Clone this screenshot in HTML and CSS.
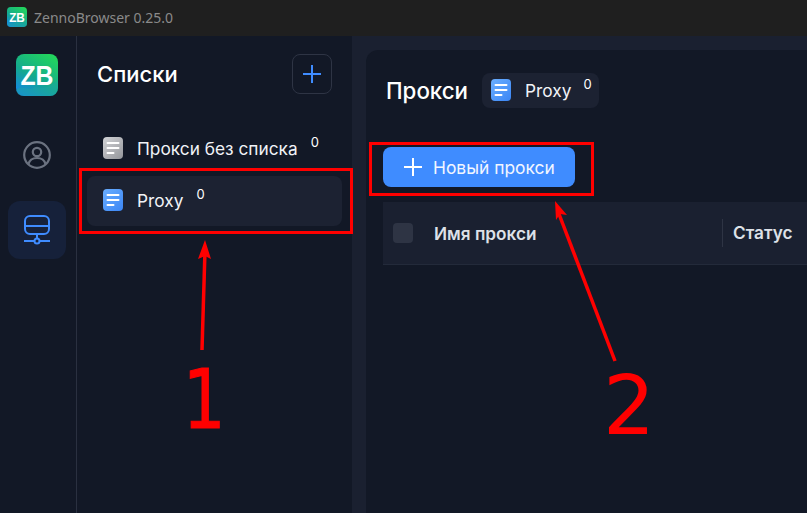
FILE: index.html
```html
<!DOCTYPE html>
<html lang="ru">
<head>
    <meta charset="UTF-8">
    <title>ZennoBrowser 0.25.0</title>
    <link rel="stylesheet" href="styles.css">
</head>
<body>
    <svg width="0" height="0" class="defs">
        <defs>
            <linearGradient id="logoGrad" x1="0.75" y1="0" x2="0.15" y2="1">
                <stop offset="0" stop-color="#22d45e"/>
                <stop offset="0.55" stop-color="#14a98f"/>
                <stop offset="1" stop-color="#1384e8"/>
            </linearGradient>
            <symbol id="logo" viewBox="0 0 42 42">
                <rect width="42" height="42" rx="8" fill="url(#logoGrad)"/>
                <path d="M0 36c6-6 12 1 17-2s10 5 25-8v8a8 8 0 0 1-8 8H8a8 8 0 0 1-8-6z" fill="#1fa8a0" opacity="0.45"/>
                <text x="4.500" y="31" class="logo-text" textLength="33" lengthAdjust="spacingAndGlyphs">ZB</text>
            </symbol>
            <symbol id="doc" viewBox="0 0 20 22">
                <path d="M4.500 6h11M4.500 11h11M4.500 16h6" fill="none" stroke="#fff" stroke-width="2" stroke-linecap="round"/>
            </symbol>
        </defs>
    </svg>

    <header class="titlebar">
        <svg class="titlebar-logo"><use href="#logo"/></svg>
        <span>ZennoBrowser 0.25.0</span>
    </header>

    <div class="app">
        <nav class="rail">
            <svg class="rail-logo"><use href="#logo"/></svg>
            <a class="rail-btn">
                <svg width="28" height="28" viewBox="0 0 28 28" fill="none" stroke="#6b7280" stroke-width="2.200">
                    <circle cx="14" cy="14" r="12.800"/>
                    <circle cx="14" cy="11" r="4.200"/>
                    <path d="M5.500 23c1-4 4.500-6 8.500-6s7.500 2 8.500 6"/>
                </svg>
            </a>
            <a class="rail-btn active">
                <svg width="28" height="30" viewBox="0 0 28 30" fill="none" stroke="#3f8cff" stroke-width="2">
                    <rect x="2" y="1" width="24" height="18" rx="5"/>
                    <path d="M2 11h24M14 19v5M1 26h10M17 26h10"/>
                    <circle cx="14" cy="26" r="2.500"/>
                </svg>
            </a>
        </nav>

        <aside class="lists">
            <div class="lists-head">
                <h2>Списки</h2>
                <button class="add-list">
                    <svg width="18" height="18" viewBox="0 0 18 18"><path d="M9 0v18M0 9h18" stroke="#3f8cff" stroke-width="2"/></svg>
                </button>
            </div>
            <ul class="list-items">
                <li class="list-item">
                    <span class="doc grey"><svg><use href="#doc"/></svg></span>
                    <span class="list-name">Прокси без списка</span>
                    <sup class="count">0</sup>
                </li>
                <li class="list-item selected">
                    <span class="doc"><svg><use href="#doc"/></svg></span>
                    <span class="list-name">Proxy</span>
                    <sup class="count">0</sup>
                </li>
            </ul>
        </aside>

        <div class="content-wrap">
            <main class="content">
                <div class="content-head">
                    <h1>Прокси</h1>
                    <div class="chip">
                        <span class="doc"><svg><use href="#doc"/></svg></span>
                        <span class="list-name">Proxy</span>
                        <sup class="count">0</sup>
                    </div>
                </div>
                <button class="new-proxy">
                    <svg width="18" height="18" viewBox="0 0 18 18"><path d="M9 0v18M0 9h18" stroke="#fff" stroke-width="2"/></svg>
                    Новый прокси
                </button>
                <div class="table-head">
                    <span class="check"></span>
                    <span class="col col-name">Имя прокси</span>
                    <span class="col col-status">Статус</span>
                </div>
            </main>
        </div>
    </div>

    <!-- пометки поверх скриншота -->
    <div class="mark mark-list"></div>
    <div class="mark mark-button"></div>
    <svg class="arrows" width="807" height="513" viewBox="0 0 807 513">
        <path d="M202 350L205 250" stroke="#f00" stroke-width="3.500"/>
        <path d="M205 240L211 259L205 256L198 259z" fill="#f00"/>
        <path d="M615 361L559 214" stroke="#f00" stroke-width="3.500"/>
        <path d="M555 201L567 215L560 214L556 220z" fill="#f00"/>
    </svg>
    <span class="num num-1">1</span>
    <span class="num num-2">2</span>
</body>
</html>
```

FILE: styles.css
```css
* {
    box-sizing: border-box;
}

html, body {
    height: 100%;
}

body {
    margin: 0;
    overflow: hidden;
    display: flex;
    flex-direction: column;
    position: relative;
    background-color: #121826;
    font-family: Inter, "Liberation Sans", sans-serif;
    color: #fff;
}

.defs {
    position: absolute;
}

.logo-text {
    font-family: "Liberation Sans", sans-serif;
    font-weight: 700;
    font-size: 28px;
    fill: #fff;
}

.titlebar {
    height: 36px;
    flex: none;
    display: flex;
    align-items: center;
    gap: 7px;
    padding: 0 0 2px 7px;
    background-color: #1f1f1f;
    color: #8a8a8a;
    font-family: "Noto Sans", sans-serif;
    font-size: 14px;
}

.titlebar-logo {
    width: 20px;
    height: 20px;
}

.app {
    flex: 1;
    display: flex;
    min-height: 0;
}

.rail {
    width: 77px;
    flex: none;
    display: flex;
    flex-direction: column;
    align-items: center;
    padding: 18px 2px 0 0;
    border-right: 1px solid #2a3040;
}

.rail-logo {
    width: 42px;
    height: 42px;
    margin-bottom: 30px;
}

.rail-btn {
    width: 58px;
    height: 58px;
    display: flex;
    align-items: center;
    justify-content: center;
    border-radius: 12px;
    margin-bottom: 17px;
}

.rail-btn.active {
    background-color: #16213a;
}

.lists {
    width: 275px;
    flex: none;
    padding: 18px 10px 0;
}

.lists-head {
    display: flex;
    align-items: center;
    justify-content: space-between;
    padding: 0 10px;
    height: 40px;
    margin-bottom: 29px;
}

.lists-head h2 {
    margin: 0;
    font-size: 22px;
    font-weight: 500;
}

.add-list {
    width: 40px;
    height: 40px;
    display: flex;
    align-items: center;
    justify-content: center;
    padding: 0;
    background: none;
    border: 1px solid #2e3444;
    border-radius: 8px;
}

.list-items {
    list-style: none;
    margin: 0;
    padding: 0;
}

.list-item {
    height: 50px;
    display: flex;
    align-items: center;
    padding: 0 16px;
    border-radius: 8px;
    margin-bottom: 3px;
}

.list-item.selected {
    padding-bottom: 2px;
    background-color: #1c2232;
}

.doc {
    width: 20px;
    height: 22px;
    flex: none;
    border-radius: 4px;
    background: linear-gradient(135deg, #6aaeff, #3b86f5);
    display: block;
}

.doc.grey {
    background: linear-gradient(135deg, #d2d3d6, #94969b);
}

.doc svg {
    width: 20px;
    height: 22px;
    display: block;
}

.list-name {
    margin-left: 14px;
    font-size: 17.3px;
    color: #f1f3f7;
}

.count {
    font-size: 13px;
    line-height: 1;
    color: #fff;
    margin: -12px 0 0 13px;
    vertical-align: baseline;
}

.content-wrap {
    flex: 1;
    min-width: 0;
    padding: 14px 0 0 14px;
    background-color: #1a2030;
}

.content {
    height: 100%;
    padding: 22px 0 0 17px;
    background-color: #121826;
    border-radius: 12px 0 0 0;
}

.content-head {
    display: flex;
    align-items: center;
    gap: 14px;
    padding: 0 0 0 3px;
    height: 36px;
    margin: 0 0 39px;
}

.content-head h1 {
    margin: 0;
    font-size: 22.300px;
    font-weight: 500;
}

.chip {
    height: 35px;
    display: flex;
    align-items: center;
    padding: 0 7px 0 9px;
    border-radius: 8px;
    background-color: #1c2232;
}

.chip .count {
    margin-left: 12px;
}

.new-proxy {
    display: flex;
    align-items: center;
    gap: 11px;
    width: 192px;
    height: 40px;
    padding: 0 0 0 21px;
    border: 0;
    border-radius: 8px;
    background-color: #3f8cff;
    color: #f2f6ff;
    font-family: inherit;
    font-size: 17.4px;
}

.table-head {
    display: flex;
    align-items: center;
    height: 63px;
    margin-top: 15px;
    padding-left: 10px;
    background-color: #1a2030;
    border-bottom: 1px solid #232a3a;
}

.check {
    width: 20px;
    height: 20px;
    border-radius: 4px;
    background-color: #2e3444;
}

.col {
    font-size: 17.2px;
    font-weight: 600;
    color: #dde1e8;
}

.col-name {
    width: 288px;
    margin-left: 21px;
}

.col-status {
    border-left: 1px solid #2e3444;
    padding-left: 10px;
    line-height: 28px;
}

.mark {
    position: absolute;
    border: 3px solid #f00;
}

.mark-list {
    left: 79px;
    top: 168px;
    width: 274px;
    height: 66px;
}

.mark-button {
    left: 369px;
    top: 142px;
    width: 225px;
    height: 54px;
}

.arrows {
    position: absolute;
    left: 0;
    top: 0;
}

.num {
    position: absolute;
    font-family: "DejaVu Sans", sans-serif;
    font-size: 82px;
    line-height: 1;
    color: #f00;
}

.num-1 {
    left: 178px;
    top: 359px;
    transform: scaleX(0.82);
    -webkit-text-stroke: 1px #f00;
}

.num-2 {
    left: 603px;
    top: 365px;
}
```
